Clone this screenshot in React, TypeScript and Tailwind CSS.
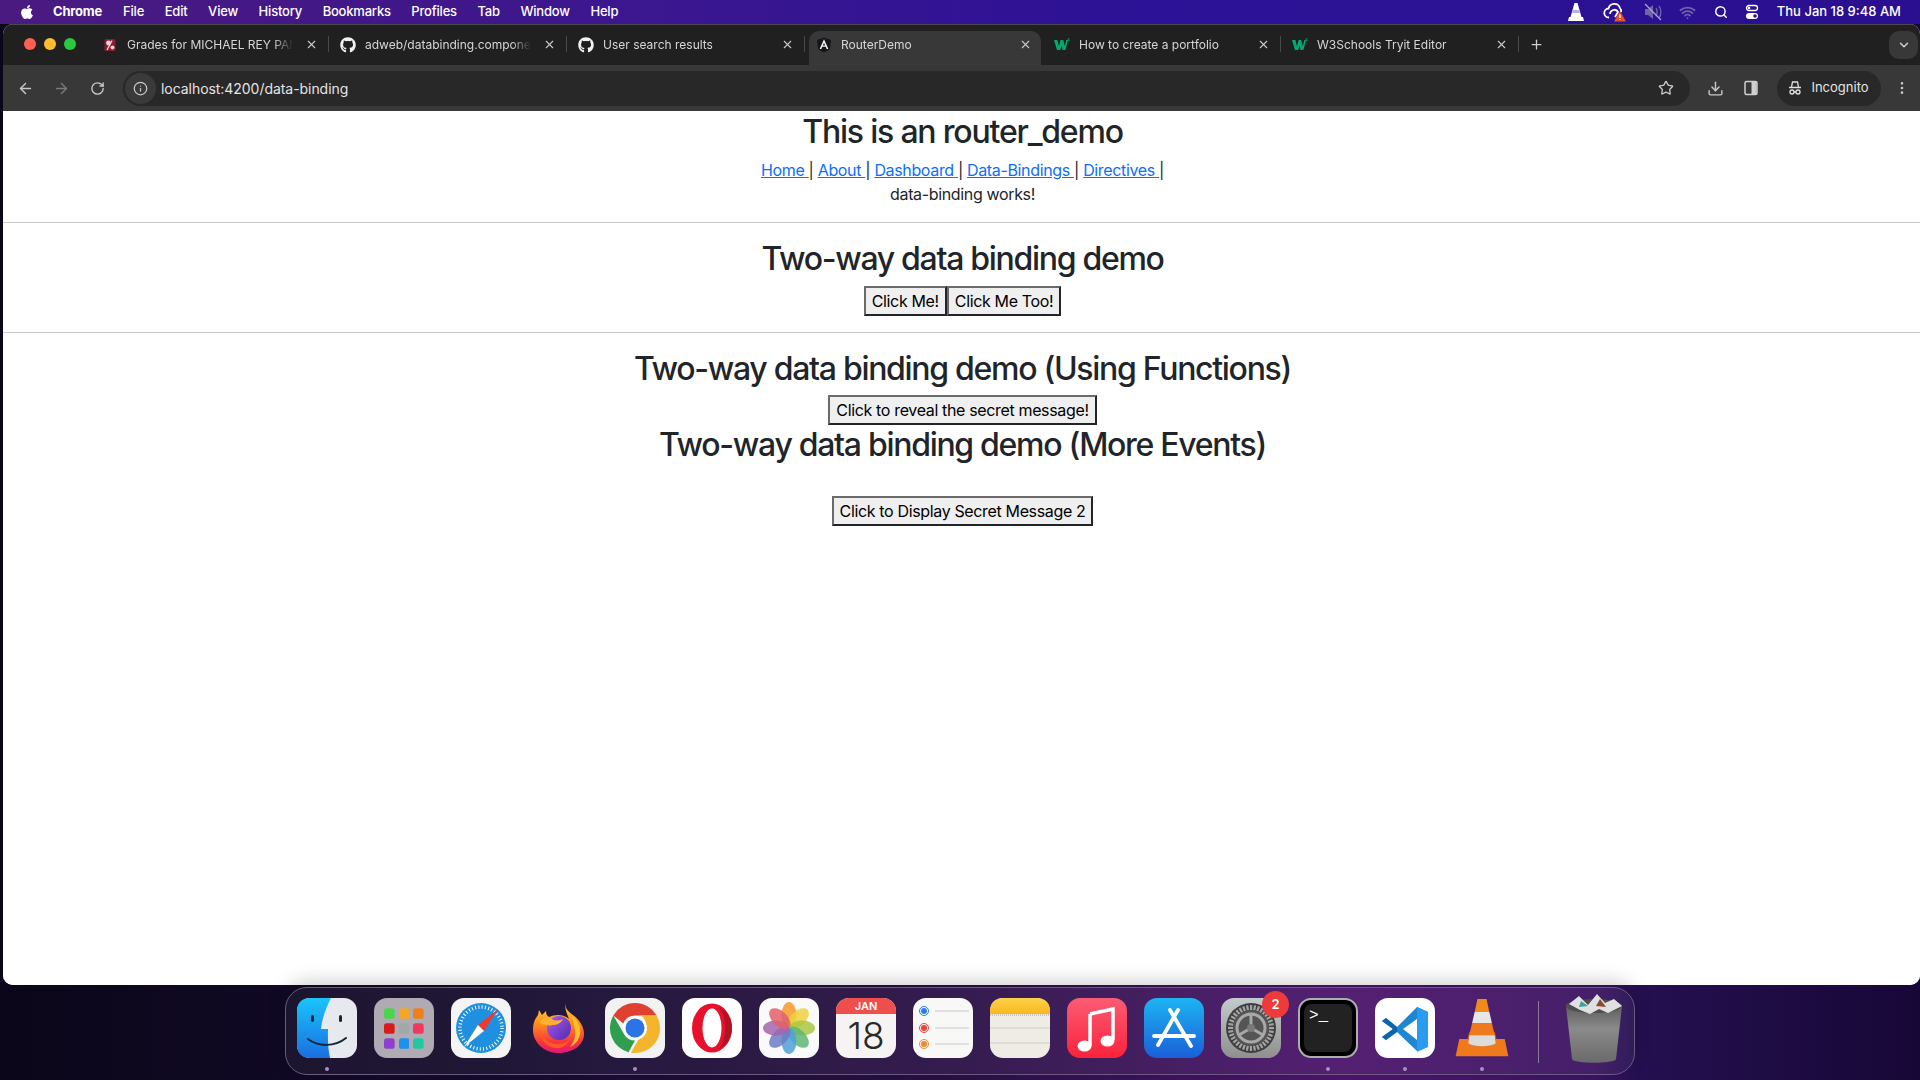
import React from 'react';
import { ArrowLeft, ArrowRight, RotateCw, Info, Star, Download, X, Plus, ChevronDown, EllipsisVertical, Search, Wifi } from 'lucide-react';
import { FaApple, FaGithub } from 'react-icons/fa';

const font = "font-['Inter','Liberation_Sans',sans-serif]";

const menuItems = ['File', 'Edit', 'View', 'History', 'Bookmarks', 'Profiles', 'Tab', 'Window', 'Help'];

// little w3schools tick
const W3Icon = () => (
  <svg width="16" height="16" viewBox="0 0 16 16">
    <path d="M0 3h3.400l1.500 6 1.700-6h2.600l1.600 6 1.500-6h1.700l-2.600 10H8.700L7.500 8.500 6.200 13H3z" fill="#04aa6d" />
    <path d="M13.500 1.500h2v.6l-1 1h1v.7h-2v-.6l1-1h-1z" fill="#04aa6d" />
  </svg>
);

const GradesIcon = () => (
  <svg width="16" height="16" viewBox="0 0 16 16">
    <rect x="2.500" y="2" width="11" height="12" rx="1.500" fill="#8a1c2e" />
    <circle cx="6.500" cy="6" r="2.400" fill="#f0d8dc" />
    <circle cx="10.500" cy="10.500" r="2" fill="#f0d8dc" />
    <path d="M10 3.500 5 13" stroke="#f0d8dc" strokeWidth="1.300" />
  </svg>
);

const AngularIcon = () => (
  <svg width="16" height="16" viewBox="0 0 16 16">
    <path d="M8 .5 1 3l1.100 9.300L8 15.500l5.900-3.200L15 3z" fill="#14161a" />
    <path fillRule="evenodd" d="M8 2.200 3.600 12h1.700l.9-2.200h3.600l.9 2.200h1.700zM6.900 8.500 8 5.800l1.100 2.700z" fill="#f4f4f4" />
  </svg>
);

const tabs = [
  { title: 'Grades for MICHAEL REY PAMINTUAN', icon: <GradesIcon /> },
  { title: 'adweb/databinding.component.html', icon: <FaGithub size={16} color="#f2f2f2" /> },
  { title: 'User search results', icon: <FaGithub size={16} color="#f2f2f2" /> },
  { title: 'RouterDemo', active: true, icon: <AngularIcon /> },
  { title: 'How to create a portfolio', icon: <W3Icon /> },
  { title: 'W3Schools Tryit Editor', icon: <W3Icon /> },
];

const Tab = ({ title, icon, active }: { title: string; icon: React.ReactNode; active?: boolean }) => (
  <div className="relative flex h-[34px] w-[238px] items-center px-[11px] pb-[7px]">
    {active && <div className="absolute inset-y-0 left-[4px] right-[2px] rounded-t-[10px] bg-[#383838]" />}
    <div className="relative flex h-4 w-4 shrink-0 items-center justify-center">{icon}</div>
    <div className="relative ml-[9px] w-[166px] overflow-hidden whitespace-nowrap text-[12px] text-[#d6d6d6] [mask-image:linear-gradient(90deg,#000_88%,transparent)]">
      {title}
    </div>
    <X className="relative ml-[12px] text-[#c8c8c8]" size={13} strokeWidth={2} />
    {!active && <div className="absolute right-0 top-[5px] h-[16px] w-px bg-[#4a4a4a]" />}
  </div>
);

const CcIcon = () => (
  <svg width="24" height="20" viewBox="0 0 24 20">
    <path d="M6 15.500a4.500 4.500 0 0 1-.5-9A6 6 0 0 1 17 6a4.700 4.700 0 0 1 1 4" fill="none" stroke="#fff" strokeWidth="1.800" />
    <path d="M7 12c0-4 6-6 8-2l-3 5" fill="none" stroke="#fff" strokeWidth="1.800" />
    <path d="M17 9l6 10.500H11z" fill="#e8502a" />
    <path d="M17 12.500v3.500M17 17v1" stroke="#fff" strokeWidth="1.300" />
  </svg>
);

const MuteIcon = () => (
  <svg width="20" height="18" viewBox="0 0 20 18">
    <path d="M2 6h3l5-4v14l-5-4H2z" fill="#6f64a8" />
    <path d="M13 5c1.500 2 1.500 6 0 8M16 3c2.500 3 2.500 9 0 12" fill="none" stroke="#6f64a8" strokeWidth="1.400" />
    <path d="M2 1l16 16" stroke="#aaa4d0" strokeWidth="1.300" />
  </svg>
);

const ConeSmall = () => (
  <svg width="16" height="20" viewBox="0 0 16 20">
    <path d="M6.500 1h3l4 14h-11z" fill="#fff" />
    <path d="M5 8h6l1 3H4z" fill="#b8b0e0" />
    <path d="M1 15h14l1 4H0z" fill="#fff" />
  </svg>
);

const ToggleIcon = () => (
  <svg width="14" height="16" viewBox="0 0 14 16">
    <rect x="1.500" y="1.500" width="11" height="5" rx="2.500" fill="none" stroke="#fff" strokeWidth="1.300" />
    <circle cx="4" cy="4" r="1.300" fill="#fff" />
    <rect x="1" y="9" width="12" height="6" rx="3" fill="#fff" />
    <circle cx="10" cy="12" r="1.800" fill="#2c1290" />
  </svg>
);

const IncognitoIcon = () => (
  <svg width="16" height="16" viewBox="0 0 16 16" fill="none" stroke="#e0e0e0" strokeWidth="1.300">
    <path d="M4.500 7l1-5h5l1 5" />
    <path d="M2 7.500h12" />
    <circle cx="5" cy="12" r="2" />
    <circle cx="11" cy="12" r="2" />
    <path d="M7 12h2" />
  </svg>
);

const SidePanelIcon = () => (
  <svg width="16" height="16" viewBox="0 0 16 16">
    <rect x="2" y="1.500" width="12" height="13" rx="1.500" fill="none" stroke="#d0d0d0" strokeWidth="1.500" />
    <rect x="8.500" y="2" width="5" height="12" fill="#d0d0d0" />
  </svg>
);

const Finder = () => (
  <svg viewBox="0 0 60 60" className="h-full w-full">
    <defs>
      <linearGradient id="finderL" x1="0" y1="0" x2="0" y2="1">
        <stop offset="0" stopColor="#1bc4fb" />
        <stop offset="1" stopColor="#1a6ee0" />
      </linearGradient>
    </defs>
    <rect width="60" height="60" rx="13" fill="#e6eaee" />
    <path d="M13 0h21c-5 10-9 20-10 31h7c-.3 10 0 20 2 29H13C5 60 0 55 0 47V13C0 5 5 0 13 0z" fill="url(#finderL)" />
    <rect x="14" y="17" width="3" height="7" rx="1.500" fill="#14283c" />
    <rect x="42" y="17" width="3" height="7" rx="1.500" fill="#14283c" />
    <path d="M11 41c10 8 27 8 38-1" fill="none" stroke="#14283c" strokeWidth="2" strokeLinecap="round" />
  </svg>
);

const launchColors = ['#4cd44c', '#f5a623', '#ee7f1d', '#d81c1c', '#a0a8a8', '#ee3a5e', '#8e3fd0', '#1e90f0', '#20c8a0'];

const Launchpad = () => (
  <div className="grid h-full w-full grid-cols-3 content-center justify-center gap-[4px] rounded-[13px] bg-[#b0aab2] px-[10px]">
    {launchColors.map((c) => (
      <svg key={c} viewBox="0 0 10 10" className="h-[11px] w-full">
        <rect width="10" height="10" rx="2.500" fill={c} />
      </svg>
    ))}
  </div>
);

const Safari = () => (
  <svg viewBox="0 0 60 60" className="h-full w-full">
    <rect width="60" height="60" rx="13" fill="#f4f4f4" />
    <circle cx="30" cy="30" r="25" fill="#1f8fe0" />
    <circle cx="30" cy="30" r="21" fill="none" stroke="#fff" strokeWidth="3.500" strokeDasharray="1 2.300" />
    <path d="M47 11 27 27l6 6z" fill="#f03a2e" />
    <path d="M13 49l20-16-6-6z" fill="#fff" />
  </svg>
);

const Firefox = () => (
  <svg viewBox="0 0 60 60" className="h-full w-full">
    <defs>
      <linearGradient id="ffA" x1="0" y1="0" x2="0" y2="1">
        <stop offset="0" stopColor="#ffdf3a" />
        <stop offset=".45" stopColor="#ff8a1c" />
        <stop offset=".8" stopColor="#f8323f" />
        <stop offset="1" stopColor="#e3157a" />
      </linearGradient>
      <linearGradient id="ffB" x1="0" y1="0" x2="1" y2="1">
        <stop offset="0" stopColor="#b55ae8" />
        <stop offset="1" stopColor="#4c2bb0" />
      </linearGradient>
    </defs>
    <path d="M38 3C36 9 39 13 45 17c7 5 11 12 11 19 0 11-11 19-26 19C17 55 5 45 5 32c0-7 2-11 5-15l1-5 3 5 4-4c0 3 1 5 3 6 6-3 15-3 20 2-3-8-5-12-3-18z" fill="url(#ffA)" />
    <path d="M44 18c6 5 9 11 8 18-1 6-5 11-10 13 4-5 6-11 5-17-1-5-2-10-3-14z" fill="#ffc02a" />
    <circle cx="31" cy="30" r="12" fill="url(#ffB)" />
    <path d="M11 24c4-4 9-6 13-3 3 2 7 2 11 0-2 4-6 6-10 6-4 1-9 1-14-3z" fill="#ffb030" />
    <path d="M12 32c2 8 9 15 19 14 6 0 10-3 12-7-3 8-9 12-16 11-9-1-15-9-15-18z" fill="#ff5a24" />
  </svg>
);

const Chrome = () => (
  <svg viewBox="0 0 60 60" className="h-full w-full">
    <rect width="60" height="60" rx="13" fill="#f2f2f2" />
    <path d="M30 5a25 25 0 0 1 21.700 12.500H30a12.500 12.500 0 0 0-11.700 8L8.300 17.500A25 25 0 0 1 30 5z" fill="#e0402f" />
    <path d="M8.300 17.500l10.800 18.700A12.500 12.500 0 0 0 30 42.500l-6.500 11.700A25 25 0 0 1 8.300 17.500z" fill="#2f9e4f" />
    <path d="M51.700 17.500A25 25 0 0 1 26 54.700l10-17.700a12.500 12.500 0 0 0 .3-19.500z" fill="#f4b42c" />
    <circle cx="30" cy="30" r="12" fill="#fff" />
    <circle cx="30" cy="30" r="9.500" fill="#2c74e4" />
  </svg>
);

const Opera = () => (
  <svg viewBox="0 0 60 60" className="h-full w-full">
    <rect width="60" height="60" rx="13" fill="#fff" />
    <ellipse cx="30" cy="30" rx="20" ry="24.500" fill="#e8112b" />
    <ellipse cx="30" cy="30" rx="9.500" ry="19.500" fill="#fff" />
    <path d="M37 9c7 3 13 11 13 21s-6 18-13 21c4-4 6-12 6-21s-2-17-6-21z" fill="#b31225" />
  </svg>
);

const petals = ['#f59a2c', '#eed13c', '#a8c844', '#5fb673', '#50a0d8', '#6a7bc6', '#a564ae', '#e0606a'];

const Photos = () => (
  <svg viewBox="0 0 60 60" className="h-full w-full">
    <rect width="60" height="60" rx="13" fill="#fafafa" />
    {petals.map((c, i) => (
      <ellipse key={c} cx="30" cy="17" rx="7.500" ry="13" fill={c} opacity=".85" transform={`rotate(${i * 45} 30 30)`} />
    ))}
  </svg>
);

const Calendar = () => (
  <div className={`flex h-full w-full flex-col overflow-hidden rounded-[13px] bg-[#f5f4f2] ${font}`}>
    <div className="h-[16px] bg-[#ef4f4c] text-center text-[11px] font-semibold leading-[16px] text-white">JAN</div>
    <div className="text-center text-[37px] font-light leading-[44px] text-[#2a2a2a]">18</div>
  </div>
);

const Reminders = () => (
  <svg viewBox="0 0 60 60" className="h-full w-full">
    <rect width="60" height="60" rx="13" fill="#f8f8f6" />
    {[['#2a7ef0', 13], ['#f0403a', 30], ['#f08a2c', 46]].map(([c, y]) => (
      <g key={c as string}>
        <circle cx="11" cy={y as number} r="4.500" fill="none" stroke={c as string} strokeWidth="1" />
        <circle cx="11" cy={y as number} r="3" fill={c as string} />
        <path d={`M22 ${y}H56`} stroke="#c8c8c8" strokeWidth="1" />
      </g>
    ))}
  </svg>
);

const Notes = () => (
  <svg viewBox="0 0 60 60" className="h-full w-full">
    <defs>
      <linearGradient id="notesTop" x1="0" y1="0" x2="0" y2="1">
        <stop offset="0" stopColor="#fdd24a" />
        <stop offset="1" stopColor="#f8b81e" />
      </linearGradient>
    </defs>
    <rect width="60" height="60" rx="13" fill="#efece6" />
    <path d="M0 16V13C0 5 5 0 13 0h34c8 0 13 5 13 13v3z" fill="url(#notesTop)" />
    <path d="M0 17h60" stroke="#bdb8ae" strokeWidth="1.500" strokeDasharray="1 1" />
    <path d="M0 30h60M0 45h60" stroke="#cfcbc4" strokeWidth="1" />
  </svg>
);

const Music = () => (
  <svg viewBox="0 0 60 60" className="h-full w-full">
    <defs>
      <linearGradient id="musicBg" x1="0" y1="0" x2="0" y2="1">
        <stop offset="0" stopColor="#fb5c74" />
        <stop offset="1" stopColor="#fa233b" />
      </linearGradient>
    </defs>
    <rect width="60" height="60" rx="13" fill="url(#musicBg)" />
    <path d="M23 16l23-5v31" fill="none" stroke="#fff" strokeWidth="3.500" />
    <path d="M23 16v32" stroke="#fff" strokeWidth="3.500" />
    <ellipse cx="17.500" cy="48" rx="7" ry="5.500" fill="#fff" />
    <ellipse cx="40.500" cy="43" rx="7" ry="5.500" fill="#fff" />
  </svg>
);

const AppStore = () => (
  <svg viewBox="0 0 60 60" className="h-full w-full">
    <defs>
      <linearGradient id="asBg" x1="0" y1="0" x2="0" y2="1">
        <stop offset="0" stopColor="#1db4f2" />
        <stop offset="1" stopColor="#1a5fd8" />
      </linearGradient>
    </defs>
    <rect width="60" height="60" rx="13" fill="url(#asBg)" />
    <g stroke="#fff" strokeWidth="3.800" strokeLinecap="round" fill="none">
      <path d="M26 12l21 36" />
      <path d="M34 12 14 47" />
      <path d="M10 38h40" />
    </g>
  </svg>
);

const gearTeeth = Array.from({ length: 36 }, (_, i) => i * 10);

const Settings = () => (
  <svg viewBox="0 0 60 60" className="h-full w-full">
    <defs>
      <linearGradient id="setBg" x1="0" y1="0" x2="0" y2="1">
        <stop offset="0" stopColor="#c4cacd" />
        <stop offset="1" stopColor="#8f8f8f" />
      </linearGradient>
    </defs>
    <rect width="60" height="60" rx="13" fill="url(#setBg)" />
    <circle cx="30" cy="30" r="25" fill="#3e3e3e" />
    {gearTeeth.map((a) => (
      <rect key={a} x="29" y="7" width="2.200" height="5" fill="#a4a4a4" transform={`rotate(${a} 30 30)`} />
    ))}
    <circle cx="30" cy="30" r="18" fill="#555555" />
    <circle cx="30" cy="30" r="14" fill="none" stroke="#a8a8a8" strokeWidth="3" />
    <g stroke="#a8a8a8" strokeWidth="3">
      <path d="M30 30V16" />
      <path d="M30 30 18 37" />
      <path d="M30 30 42 37" />
    </g>
    <circle cx="30" cy="30" r="4" fill="#7a7a7a" />
  </svg>
);

const Terminal = () => (
  <div className="h-full w-full rounded-[13px] border-2 border-[#a9b0ae] bg-black p-[4px]">
    <div className="h-full w-full rounded-[8px] bg-[#222222] pl-[5px] font-['Liberation_Mono',monospace] text-[16px] leading-[24px] text-white">
      &gt;_
    </div>
  </div>
);

const VsCode = () => (
  <svg viewBox="0 0 60 60" className="h-full w-full">
    <rect width="60" height="60" rx="13" fill="#fff" />
    <path d="M42 9 22 29 11 20l-4 3 11 8-11 8 4 3 11-8 20 19 11-5V14z" fill="#1f86d2" />
    <path d="M42 9v45l11-5V14z" fill="#2a9cf0" />
    <path d="M42 21 28 31l14 11z" fill="#fff" />
    <path d="M22 29 11 20l-4 3 11 8-11 8 4 3 11-8z" fill="#0e65ad" />
  </svg>
);

const Vlc = () => (
  <svg viewBox="0 0 60 66" className="h-full w-full overflow-visible">
    <path d="M5 45h50l4 19H1z" fill="#ee7a1c" />
    <path d="M14 45c6 8 26 8 32 0l-2-8H16z" fill="#c95a1c" />
    <path d="M25 1h10l3 14H22z" fill="#f08a1e" />
    <path d="M22 15h16l3 13H19z" fill="#e6e6e6" />
    <path d="M19 28h22l3 13H16z" fill="#ee7a1c" />
    <path d="M16 41h28l1 9c-7 4-23 4-30 0z" fill="#dcdcdc" />
  </svg>
);

const Trash = () => (
  <svg viewBox="0 0 60 70" className="h-full w-full overflow-visible">
    <defs>
      <linearGradient id="trashBg" x1="0" y1="0" x2="0" y2="1">
        <stop offset="0" stopColor="#5e5e5e" />
        <stop offset=".4" stopColor="#8a8a8a" />
        <stop offset="1" stopColor="#6a6a6a" />
      </linearGradient>
    </defs>
    <path d="M2 13h56l-6 53c-1 5-43 5-44 0z" fill="url(#trashBg)" />
    <ellipse cx="30" cy="13" rx="28" ry="7" fill="#4e4e4e" />
    <path d="M5 11 15 3l9 9 9-11 8 9 9-4 8 7-14 7-9-4-9 5-10-4z" fill="#e0e0e0" />
    <path d="M17 8l7 5-9 1z" fill="#3aa0a0" />
    <path d="M36 6l6 8-10-1z" fill="#8a4a30" />
  </svg>
);

const dockItems: { key: string; icon: React.ReactNode; dot?: boolean; badge?: string }[] = [
  { key: 'finder', icon: <Finder />, dot: true },
  { key: 'launchpad', icon: <Launchpad /> },
  { key: 'safari', icon: <Safari /> },
  { key: 'firefox', icon: <Firefox /> },
  { key: 'chrome', icon: <Chrome />, dot: true },
  { key: 'opera', icon: <Opera /> },
  { key: 'photos', icon: <Photos /> },
  { key: 'calendar', icon: <Calendar /> },
  { key: 'reminders', icon: <Reminders /> },
  { key: 'notes', icon: <Notes /> },
  { key: 'music', icon: <Music /> },
  { key: 'appstore', icon: <AppStore /> },
  { key: 'settings', icon: <Settings />, badge: '2' },
  { key: 'terminal', icon: <Terminal />, dot: true },
  { key: 'vscode', icon: <VsCode />, dot: true },
  { key: 'vlc', icon: <Vlc />, dot: true },
];

const DockIcon = ({ icon, dot, badge }: { icon: React.ReactNode; dot?: boolean; badge?: string }) => (
  <div className="relative h-[60px] w-[60px]">
    {icon}
    {badge && (
      <div className={`absolute -right-[8px] -top-[7px] flex h-[27px] w-[27px] items-center justify-center rounded-full bg-[#ee3a3a] text-[13px] font-semibold text-white ${font}`}>
        {badge}
      </div>
    )}
    {dot && <div className="absolute -bottom-[13px] left-[28px] h-1 w-1 rounded-full bg-[#a78fc4]" />}
  </div>
);

const PageButton = ({ children }: { children: React.ReactNode }) => (
  <button className="h-[30px] border-2 border-solid border-b-[#212529] border-l-[#6b6b6b] border-r-[#212529] border-t-[#6b6b6b] bg-[#efefef] px-1.5 text-[16px] leading-6 text-black">
    {children}
  </button>
);

const Heading = ({ children, className }: { children: React.ReactNode; className?: string }) => (
  <h2 className={`text-[32px] font-medium leading-[38px] tracking-[-1.3px] text-[#212529] ${className ?? ''}`}>{children}</h2>
);

const navLinks = ['Home', 'About', 'Dashboard', 'Data-Bindings', 'Directives'];

export default function App() {
  return (
    <div className={`flex h-[1080px] w-[1920px] flex-col overflow-hidden bg-[linear-gradient(90deg,#0b0619_0%,#140b2c_25%,#2a1046_50%,#4c156c_70%,#3c1462_83%,#241050_85.3%,#170736_100%)] ${font}`}>
      {/* Menu bar */}
      <div className="flex h-6 shrink-0 items-center bg-[linear-gradient(90deg,#4a1a80_0%,#3a1690_35%,#2c1296_60%,#2a1090_100%)] px-[19px] text-[13px] tracking-[-0.2px] text-white">
        <FaApple size={16} />
        <span className="ml-[18px] font-bold">Chrome</span>
        <div className="ml-[21px] flex gap-[20.600px] font-medium">
          {menuItems.map((m) => (
            <span key={m}>{m}</span>
          ))}
        </div>
        <div className="ml-auto flex items-center">
          <ConeSmall />
          <div className="ml-[19px]"><CcIcon /></div>
          <div className="ml-[16px]"><MuteIcon /></div>
          <Wifi className="ml-[16px] text-[#6f64a8]" size={17} strokeWidth={2.500} />
          <Search className="ml-[18px]" size={14} strokeWidth={2.500} />
          <div className="ml-[17px]"><ToggleIcon /></div>
          <span className="ml-[18px] font-medium tracking-[0]">Thu Jan 18 9:48 AM</span>
        </div>
      </div>

      {/* Browser window */}
      <div className="ml-[3px] flex h-[961px] shrink-0 flex-col overflow-hidden rounded-[10px] bg-white">
        <div className="flex h-[41px] shrink-0 items-end border-t border-[#4a4a4a] bg-[#202020]">
          <div className="mb-[2px] flex w-[88px] shrink-0 items-center gap-[8px] self-center pl-[21px]">
            <div className="h-3 w-3 rounded-full bg-[#ff5f57]" />
            <div className="h-3 w-3 rounded-full bg-[#febc2e]" />
            <div className="h-3 w-3 rounded-full bg-[#28c840]" />
          </div>
          {tabs.map((t) => (
            <Tab key={t.title} title={t.title} icon={t.icon} active={t.active} />
          ))}
          <div className="mb-[13px] ml-[10px] text-[#d0d0d0]"><Plus size={15} /></div>
          <div className="mb-[6px] ml-auto mr-[2px] flex h-[28px] w-[29px] items-center justify-center rounded-[10px] bg-[#383838] text-[#d0d0d0]">
            <ChevronDown size={14} strokeWidth={2.500} />
          </div>
        </div>

        <div className="flex h-[46px] shrink-0 items-center bg-[#383838] text-[#c8c8c8]">
          <ArrowLeft className="ml-[14px]" size={17} />
          <ArrowRight className="ml-[19px] text-[#7a7a7a]" size={17} />
          <RotateCw className="ml-[20px]" size={15} strokeWidth={2.200} />
          <div className="ml-[18px] flex h-[35px] w-[1567px] items-center rounded-full bg-[#282828]">
            <div className="ml-[2px] flex h-[31px] w-[31px] items-center justify-center rounded-full bg-[#3a3a3a]">
              <Info size={15} />
            </div>
            <span className="ml-[5px] text-[14px] tracking-[-0.05px] text-[#e4e4e4]">localhost:4200/data-binding</span>
            <Star className="ml-auto mr-[16px]" size={16} strokeWidth={2} />
          </div>
          <Download className="ml-[17px]" size={17} />
          <div className="ml-[19px]"><SidePanelIcon /></div>
          <div className="ml-[18px] flex h-[35px] w-[104px] items-center justify-center gap-[8px] rounded-full bg-[#282828] pr-[2px] text-[13px] text-[#e4e4e4]">
            <IncognitoIcon />
            Incognito
          </div>
          <EllipsisVertical className="ml-[13px]" size={16} />
        </div>

        {/* Page */}
        <div className="flex-1 bg-white pl-[2px] pt-[2px] text-center text-[16px] leading-6 tracking-[-0.35px] text-[#212529]">
          <h1 className="mb-[7px] text-[32px] font-medium leading-[38px] tracking-[-1.2px]">This is an router_demo</h1>
          <div>
            {navLinks.map((l) => (
              <span key={l}>
                <a className="text-[#0d6efd] underline">{l} </a>
                {'| '}
              </span>
            ))}
          </div>
          <div>data-binding works!</div>
          <hr className="-ml-[2px] mb-[17px] mt-4 border-t border-[#c9c9c9]" />
          <Heading className="mb-2">Two-way data binding demo</Heading>
          <div className="flex justify-center">
            <PageButton>Click Me!</PageButton>
            <PageButton>Click Me Too!</PageButton>
          </div>
          <hr className="-ml-[2px] mb-[17px] mt-4 border-t border-[#c9c9c9]" />
          <Heading className="mb-[7px]">Two-way data binding demo (Using Functions)</Heading>
          <div className="flex justify-center">
            <PageButton>Click to reveal the secret message!</PageButton>
          </div>
          <Heading className="mb-[32px] mt-px">Two-way data binding demo (More Events)</Heading>
          <div className="flex justify-center">
            <PageButton>Click to Display Secret Message 2</PageButton>
          </div>
        </div>
      </div>

      {/* Dock */}
      <div className="flex flex-1 items-start pl-[285px] pt-[2px]">
        <div className="relative flex h-[88px] w-[1350px] items-start rounded-[22px] border border-[#6a5a80] bg-[#ffffff0d] pl-[11px] pt-[10px] shadow-[0_-6px_18px_rgba(0,0,0,0.18)]">
          <div className="flex gap-[17px]">
            {dockItems.map((d) => (
              <DockIcon key={d.key} icon={d.icon} dot={d.dot} badge={d.badge} />
            ))}
          </div>
          <div className="ml-[26px] mt-[3px] h-[62px] w-px bg-[#8a7a9a]" />
          <div className="ml-[25px] h-[70px] w-[60px] -translate-y-[5px]"><Trash /></div>
        </div>
      </div>
    </div>
  );
}
